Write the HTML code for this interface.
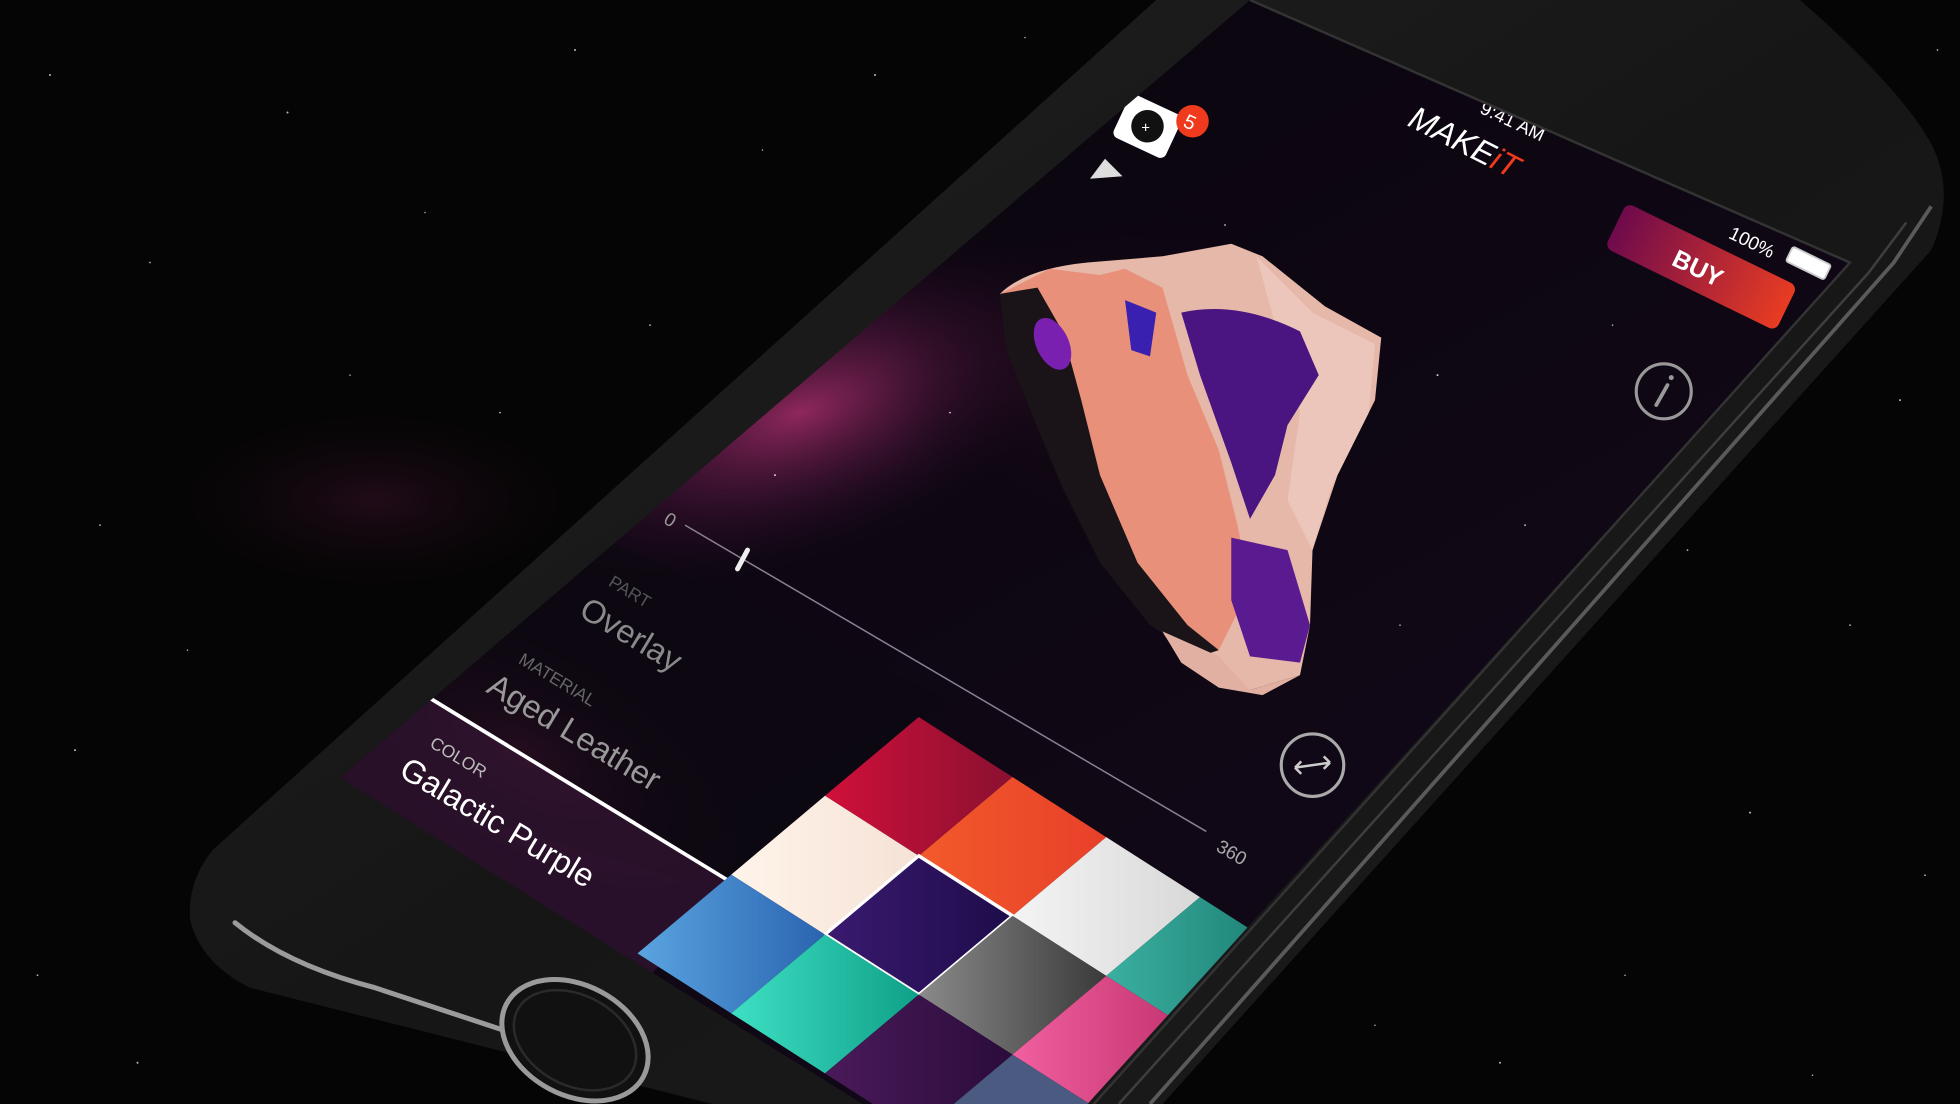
<!DOCTYPE html>
<html><head><meta charset="utf-8">
<style>
html,body{margin:0;padding:0;background:#050505;width:1960px;height:1104px;overflow:hidden}
svg{display:block;overflow:hidden}
text{font-family:"Liberation Sans",sans-serif}
</style></head>
<body>
<svg width="1960" height="1104" viewBox="0 0 1568 883" preserveAspectRatio="none" xmlns="http://www.w3.org/2000/svg">
<defs>
<radialGradient id="neb1" cx="0.5" cy="0.5" r="0.5">
<stop offset="0" stop-color="#b0306f" stop-opacity="0.8"/>
<stop offset="0.5" stop-color="#5a1845" stop-opacity="0.45"/>
<stop offset="1" stop-color="#1a0818" stop-opacity="0"/>
</radialGradient>
<radialGradient id="neb2" cx="0.5" cy="0.5" r="0.5">
<stop offset="0" stop-color="#4a1535" stop-opacity="0.4"/>
<stop offset="1" stop-color="#000" stop-opacity="0"/>
</radialGradient>
<linearGradient id="buy" x1="0" y1="0" x2="1" y2="0">
<stop offset="0" stop-color="#6e0a4c"/><stop offset="1" stop-color="#e83c22"/>
</linearGradient>
<linearGradient id="phone" x1="0" y1="0" x2="1" y2="1">
<stop offset="0" stop-color="#222"/><stop offset="0.5" stop-color="#161616"/><stop offset="1" stop-color="#1c1c1c"/>
</linearGradient>
<linearGradient id="scrbg" x1="0" y1="0" x2="1" y2="1">
<stop offset="0" stop-color="#08040c"/><stop offset="1" stop-color="#140a1a"/>
</linearGradient>
<linearGradient id="c1" x1="0" y1="0" x2="1" y2="1"><stop offset="0" stop-color="#d0103a"/><stop offset="1" stop-color="#8a1030"/></linearGradient>
<linearGradient id="c2" x1="0" y1="0" x2="1" y2="1"><stop offset="0" stop-color="#f25a2a"/><stop offset="1" stop-color="#e8402a"/></linearGradient>
<linearGradient id="c3" x1="0" y1="0" x2="1" y2="1"><stop offset="0" stop-color="#fff4ea"/><stop offset="1" stop-color="#f6e2d6"/></linearGradient>
<linearGradient id="c4" x1="0" y1="0" x2="1" y2="1"><stop offset="0" stop-color="#3a1a70"/><stop offset="1" stop-color="#1e0c4a"/></linearGradient>
<linearGradient id="c5" x1="0" y1="0" x2="1" y2="1"><stop offset="0" stop-color="#f4f4f4"/><stop offset="1" stop-color="#d8d8d8"/></linearGradient>
<linearGradient id="c6" x1="0" y1="0" x2="1" y2="1"><stop offset="0" stop-color="#5aa4e0"/><stop offset="1" stop-color="#2a64b0"/></linearGradient>
<linearGradient id="c7" x1="0" y1="0" x2="1" y2="1"><stop offset="0" stop-color="#3ee0c4"/><stop offset="1" stop-color="#0fa088"/></linearGradient>
<linearGradient id="c8" x1="0" y1="0" x2="1" y2="1"><stop offset="0" stop-color="#8a8a8a"/><stop offset="1" stop-color="#3a3a3a"/></linearGradient>
<linearGradient id="c9" x1="0" y1="0" x2="1" y2="1"><stop offset="0" stop-color="#3ab0a0"/><stop offset="1" stop-color="#1a7a70"/></linearGradient>
<linearGradient id="c10" x1="0" y1="0" x2="1" y2="1"><stop offset="0" stop-color="#f060a0"/><stop offset="1" stop-color="#c0306a"/></linearGradient>
<linearGradient id="c11" x1="0" y1="0" x2="1" y2="1"><stop offset="0" stop-color="#4a1a5a"/><stop offset="1" stop-color="#2a0c3a"/></linearGradient>
<clipPath id="scr"><polygon points="1000,0 1480,210 870,883 690,883 272,622"/></clipPath>
</defs>

<rect width="1568" height="883" fill="#050505"/>
<ellipse cx="300" cy="400" rx="200" ry="90" fill="url(#neb2)"/>
<g fill="#bbb">
<circle cx="40" cy="60" r="0.8"/><circle cx="120" cy="210" r="0.7"/><circle cx="230" cy="90" r="0.8"/><circle cx="340" cy="170" r="0.6"/><circle cx="460" cy="40" r="0.8"/><circle cx="520" cy="260" r="0.7"/><circle cx="610" cy="120" r="0.6"/><circle cx="700" cy="60" r="0.8"/><circle cx="80" cy="420" r="0.7"/><circle cx="60" cy="600" r="0.8"/><circle cx="150" cy="520" r="0.6"/><circle cx="30" cy="780" r="0.7"/><circle cx="110" cy="850" r="0.8"/><circle cx="820" cy="30" r="0.6"/><circle cx="400" cy="330" r="0.7"/><circle cx="1520" cy="320" r="0.8"/><circle cx="1480" cy="500" r="0.7"/><circle cx="1400" cy="650" r="0.8"/><circle cx="1300" cy="780" r="0.6"/><circle cx="1540" cy="700" r="0.7"/><circle cx="1200" cy="850" r="0.8"/><circle cx="1450" cy="860" r="0.6"/><circle cx="1550" cy="40" r="0.7"/><circle cx="1100" cy="820" r="0.6"/><circle cx="1350" cy="440" r="0.7"/><circle cx="280" cy="300" r="0.6"/><circle cx="190" cy="700" r="0.7"/>
</g>

<!-- phone body -->
<path d="M925,0 L1440,0 Q1520,70 1545,115 Q1565,155 1545,200 L930,883 L570,883 L200,790 Q160,770 152,735 Q150,705 170,680 Z" fill="url(#phone)"/>
<polyline points="1545,165 1515,210 920,883" fill="none" stroke="#5a5a5a" stroke-width="3"/>
<polyline points="1525,178 1495,218 895,883" fill="none" stroke="#3e3e3e" stroke-width="2"/>
<path d="M188,738 Q230,772 300,790 L415,828" fill="none" stroke="#bdbdbd" stroke-width="4" stroke-linecap="round" opacity="0.8"/>
<ellipse cx="460" cy="832" rx="62" ry="44" transform="rotate(28 460 832)" fill="#111" stroke="#9a9a9a" stroke-width="4"/>
<ellipse cx="460" cy="832" rx="52" ry="36" transform="rotate(28 460 832)" fill="none" stroke="#2a2a2a" stroke-width="2"/>

<!-- screen -->
<g clip-path="url(#scr)">
<rect width="1568" height="883" fill="url(#scrbg)"/>
<ellipse cx="640" cy="330" rx="260" ry="120" transform="rotate(-20 640 330)" fill="url(#neb1)"/>
<ellipse cx="420" cy="600" rx="200" ry="90" transform="rotate(30 420 600)" fill="url(#neb1)" opacity="0.7"/>
<ellipse cx="900" cy="300" rx="200" ry="150" fill="url(#neb2)"/>
<g fill="#ccc"><circle cx="700" cy="250" r="0.8"/><circle cx="760" cy="330" r="0.7"/><circle cx="1150" cy="300" r="0.8"/><circle cx="1220" cy="420" r="0.7"/><circle cx="1120" cy="500" r="0.6"/><circle cx="980" cy="180" r="0.7"/><circle cx="1290" cy="260" r="0.6"/><circle cx="620" cy="380" r="0.8"/></g>
<polygon points="480,430 760,560 660,640 600,720 272,622" fill="#0c0810" opacity="0.75"/>
<polygon points="340,555 590,710 520,780 272,622" fill="#3a1838" opacity="0.6"/>
<line x1="340" y1="556" x2="592" y2="710" stroke="#fff" stroke-width="3"/>
<g transform="matrix(75,48,75,-63,660,692)">
<rect x="-0.5" y="0.5" width="1" height="1" fill="url(#c1)"/>
<rect x="0.5" y="0.5" width="1" height="1" fill="url(#c2)"/>
<rect x="-0.5" y="-0.5" width="1" height="1" fill="url(#c3)"/>
<rect x="0.5" y="-0.5" width="1" height="1" fill="url(#c4)" stroke="#fff" stroke-width="0.03"/>
<rect x="1.5" y="0.5" width="1" height="1" fill="url(#c5)"/>
<rect x="-0.5" y="-1.5" width="1" height="1" fill="url(#c6)"/>
<rect x="0.5" y="-1.5" width="1" height="1" fill="url(#c7)"/>
<rect x="1.5" y="-0.5" width="1" height="1" fill="url(#c8)"/>
<rect x="2.5" y="0.5" width="1" height="1" fill="url(#c9)"/>
<rect x="2.5" y="-0.5" width="1" height="1" fill="url(#c10)"/>
<rect x="1.5" y="-1.5" width="1" height="1" fill="url(#c11)"/>
<rect x="2.5" y="-1.5" width="1" height="1" fill="#4a5a80"/>
</g>
<line x1="548" y1="420" x2="965" y2="665" stroke="#8a8090" stroke-width="1.2"/>
<line x1="590" y1="455" x2="598" y2="440" stroke="#eee" stroke-width="4" stroke-linecap="round"/>
<text x="530" y="418" fill="#999" font-size="15" transform="rotate(30 530 418)">0</text>
<text x="972" y="680" fill="#aaa" font-size="15" transform="rotate(30 972 680)">360</text>
<text x="486" y="468" fill="#555" font-size="14" transform="rotate(31 486 468)">PART</text>
<text x="462" y="492" fill="#8a8a8a" font-size="26" transform="rotate(31 462 492)">Overlay</text>
<text x="414" y="530" fill="#666" font-size="14" transform="rotate(31 414 530)">MATERIAL</text>
<text x="388" y="553" fill="#999" font-size="26" transform="rotate(31 388 553)">Aged Leather</text>
<text x="343" y="597" fill="#bbb" font-size="14" transform="rotate(31 343 597)">COLOR</text>
<text x="318" y="620" fill="#fff" font-size="26" transform="rotate(31 318 620)">Galactic Purple</text>
<!-- shoe -->
<path d="M800,235 Q820,215 870,210 L930,205 L985,195 L1010,205 L1060,245 L1105,270 L1100,320 L1070,380 L1050,440 L1048,500 L1040,540 L1000,552 L975,548 L940,520 L905,470 L870,410 L835,330 L810,280 Z" fill="#e6b8aa"/>
<path d="M1005,205 L1050,250 L1100,275 L1095,330 L1065,390 L1050,440 L1030,400 L1040,330 Z" fill="#ecc6ba"/>
<path d="M800,235 L840,215 L880,220 L900,215 L930,230 L950,300 L975,360 L990,420 L1000,470 L975,520 L940,505 L900,440 L860,360 L820,290 Z" fill="#e8907a"/>
<path d="M945,250 Q990,240 1040,265 L1055,300 L1030,340 L1020,380 L1000,415 L985,370 L960,300 Z" fill="#4a1580"/>
<path d="M985,430 L1030,440 L1048,500 L1040,530 L1000,525 L985,480 Z" fill="#5a1a90"/>
<path d="M900,240 L925,250 L920,285 L905,280 Z" fill="#3a20b0"/>
<path d="M800,235 L830,230 L850,265 L865,320 L880,380 L910,450 L950,500 L975,520 L960,525 L920,500 L880,450 L850,390 L825,330 L805,280 Z" fill="#1a1418"/>
<path d="M930,505 L975,525 L1000,552 L1040,540 L1010,556 L975,550 L945,530 Z" fill="#e2b0a2"/>
<ellipse cx="842" cy="275" rx="13" ry="22" transform="rotate(-25 842 275)" fill="#7a20b0"/>
<!-- top UI -->
<path d="M968,22 L972,10 L988,6" fill="none" stroke="#ff4a1a" stroke-width="3"/>
<text x="1028" y="12" fill="#eee" font-size="12" transform="rotate(25 1028 12)">MI</text>
<circle cx="1025" cy="3" r="3" fill="#fff"/>
<path d="M1092,40 a8,8 0 0 1 12,-5 M1095,41 a4,4 0 0 1 6,-3" fill="none" stroke="#ddd" stroke-width="2"/>
<rect x="895" y="82" width="46" height="38" rx="5" transform="rotate(25 918 101)" fill="#fff"/>
<circle cx="918" cy="101" r="13" fill="#111"/>
<text x="913" y="106" fill="#fff" font-size="12">+</text>
<circle cx="954" cy="97" r="13" fill="#f03a1e"/>
<text x="948" y="104" fill="#fff" font-size="16" transform="rotate(25 954 97)">5</text>
<polygon points="872,143 884,127 898,141" fill="#ddd"/>
<text x="1183" y="90" fill="#fff" font-size="15" transform="rotate(25 1183 90)">9:41 AM</text>
<text x="1125" y="100" fill="#fff" font-size="26" font-style="italic" transform="rotate(27 1125 100)">MAKE<tspan fill="#f03a1e">iT</tspan></text>
<g transform="rotate(26 1360 213)">
<rect x="1285" y="193" width="152" height="40" rx="6" fill="url(#buy)"/>
<text x="1338" y="222" fill="#fff" font-size="20" font-weight="bold">BUY</text>
</g>
<text x="1382" y="190" fill="#fff" font-size="15" transform="rotate(26 1382 190)">100%</text>
<rect x="1430" y="204" width="34" height="13" rx="2" transform="rotate(26 1447 210)" fill="#fff" stroke="#ccc" stroke-width="1.5"/>
<circle cx="1331" cy="313" r="22" fill="none" stroke="#999" stroke-width="2.5"/>
<line x1="1325" y1="324" x2="1334" y2="308" stroke="#999" stroke-width="3" stroke-linecap="round"/>
<circle cx="1337" cy="302" r="2" fill="#999"/>
<circle cx="1050" cy="612" r="25" fill="none" stroke="#aaa" stroke-width="2.5"/>
<path d="M1036,614 L1064,610 M1036,614 l5,-5 M1036,614 l5,5 M1064,610 l-5,-5 M1064,610 l-5,5" fill="none" stroke="#ccc" stroke-width="2"/>
</g>
<polyline points="1000,0 1480,210 875,883" fill="none" stroke="#333" stroke-width="2"/>
</svg>
</body></html>
